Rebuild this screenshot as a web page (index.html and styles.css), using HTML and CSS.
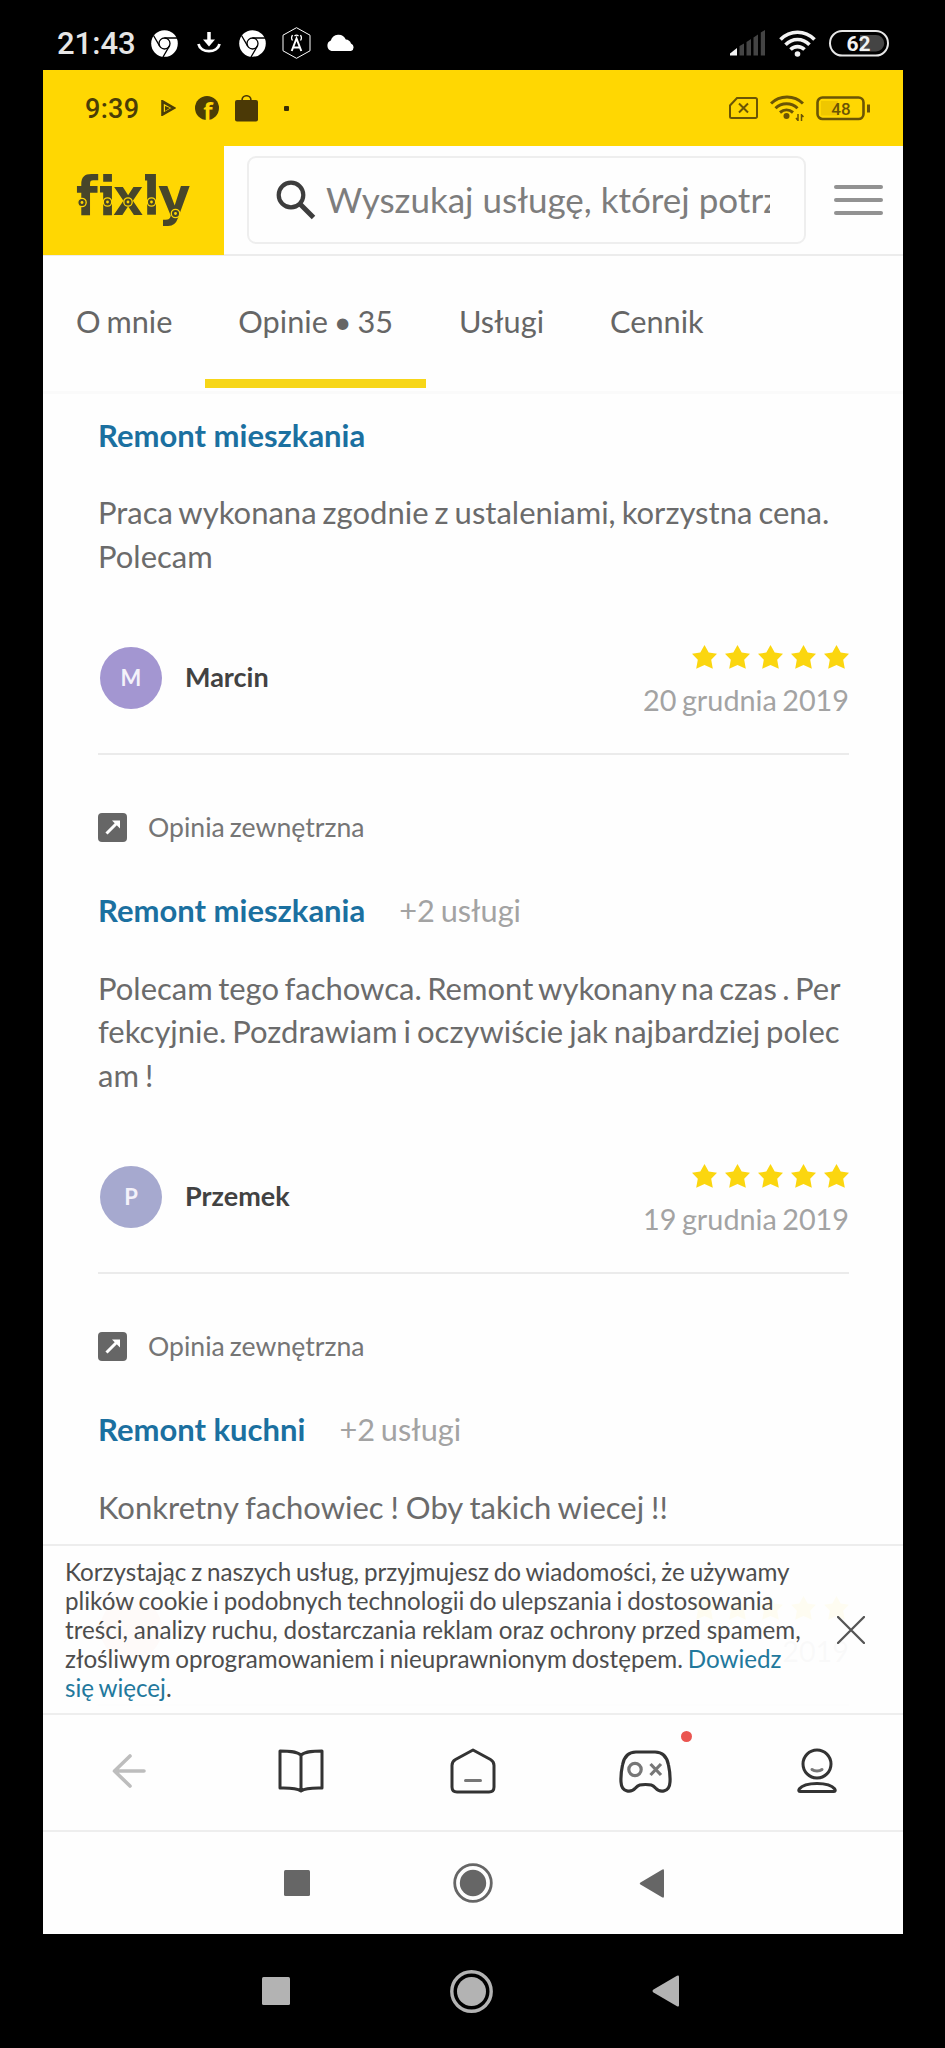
FILE: index.html
```html
<!DOCTYPE html>
<html lang="pl">
<head>
<meta charset="utf-8">
<title>Fixly – opinie</title>
<link rel="stylesheet" href="styles.css">
</head>
<body>
<svg width="0" height="0" class="defs">
  <defs>
    <symbol id="star" viewBox="0 0 25 24"><path d="M12.500 0l4.200 7.600 8.300 1.100-5.800 6 1.600 9-8.300-3.700L4.200 23.700l1.600-9L0 8.700l8.300-1.100z"/></symbol>
    <symbol id="stars" viewBox="0 0 157 24">
      <use href="#star" x="0" width="25" height="24"/><use href="#star" x="33" width="25" height="24"/><use href="#star" x="66" width="25" height="24"/><use href="#star" x="99" width="25" height="24"/><use href="#star" x="132" width="25" height="24"/>
    </symbol>
    <symbol id="chrome" viewBox="0 0 27 27">
      <circle cx="13.500" cy="13.500" r="13.300" fill="#fff"/>
      <g fill="none" stroke="#000" stroke-width="1.300"><circle cx="13.500" cy="13.500" r="5.500"/><path d="M13.500 8H26M8.700 16.200L2.500 5.500M18.300 16.200L12 27"/></g>
    </symbol>
    <symbol id="external" viewBox="0 0 29 29"><rect width="29" height="29" rx="4" fill="#666"/><path d="M8.500 20.500L19 10" stroke="#fff" stroke-width="3"/><path d="M14 7.500h8V15.500z" fill="#fff"/></symbol>
  </defs>
</svg>

<header class="status outer">
  <span class="time">21:43</span>
  <svg class="s-chrome1" width="27" height="27"><use href="#chrome"/></svg>
  <svg class="s-down" width="24" height="22" viewBox="0 0 24 22"><path d="M12 0v9" stroke="#fff" stroke-width="3.500"/><path d="M6 7.500h12l-6 7z" fill="#fff"/><path d="M1.500 12c2 9.500 19 9.500 21 0" fill="none" stroke="#fff" stroke-width="2.800"/></svg>
  <svg class="s-chrome2" width="27" height="27"><use href="#chrome"/></svg>
  <svg class="s-hex" width="29" height="32" viewBox="0 0 29 32" fill="none" stroke="#fff"><path d="M14.500.7L28 8.200v15.600L14.500 31.300 1 23.800V8.200z"/><path d="M9.700 24l4.800-12.500L19.300 24M11.500 20.500h6" stroke-width="2"/><path d="M10.500 13.500a5 5 0 0 1 0-5.500M18.500 13.500a5 5 0 0 0 0-5.500M12.500 9a3 3 0 0 1 4 0" stroke-width="1.300"/></svg>
  <svg class="s-cloud" width="29" height="17" viewBox="0 0 29 17" fill="#fff"><path d="M5.500 17a5.500 5.500 0 0 1-.7-10.400A8 8 0 0 1 19.800 5.500 6 6 0 0 1 25 9.500 4 4 0 0 1 25 17z"/></svg>
  <svg class="s-signal" width="35" height="26" viewBox="0 0 35 26"><path d="M0 25.500v-2L7 18v7.500z" fill="#f2f2f2"/><path d="M9.500 25.500V16l4.500-2.500v12zM16.500 25.500V12L21 9v16.500zM23.500 25.500V7.500L28 4.500v21zM30.800 25.500V2.500L35 0v25.500z" fill="#444"/></svg>
  <svg class="s-wifi" width="37" height="27" viewBox="0 0 37 27" fill="none" stroke="#f2f2f2" stroke-width="3.600"><path d="M1.500 9.500C11-.2 26-.2 35.500 9.500M6.500 14.700c7-7 17-7 24 0M11.500 19.600c4-4 10-4 14 0"/><circle cx="18.500" cy="24" r="2.800" fill="#f2f2f2" stroke="none"/></svg>
  <svg class="s-batt" width="60" height="27" viewBox="0 0 60 27"><rect x="1" y="1" width="58" height="24.500" rx="12.200" fill="none" stroke="#e6e6e6" stroke-width="2"/><path d="M31 5h16a8 8 0 0 1 0 16.500H31z" fill="#444"/><text x="29.500" y="21" text-anchor="middle" class="batt-num">62</text></svg>
</header>

<div class="phone">
  <div class="status inner">
    <span class="time2">9:39</span>
    <svg class="i-play" width="15" height="16" viewBox="0 0 15 16"><path d="M1.500 1.500L13 8 1.500 14.500z" fill="none" stroke="#4b3d06" stroke-width="2.600"/><path d="M4 6l5 2-5 3z" fill="#4b3d06"/></svg>
    <svg class="i-fb" width="24" height="24" viewBox="0 0 24 24"><circle cx="12" cy="12" r="12" fill="#4b3d06"/><text x="12.800" y="23.500" text-anchor="middle" class="fb-f">f</text></svg>
    <svg class="i-bag" width="23" height="27" viewBox="0 0 23 27"><rect y="5" width="23" height="21.500" rx="2" fill="#4b3906"/><path d="M7 5.500C7-.8 16-.8 16 5.500" fill="none" stroke="#4b3906" stroke-width="1.600"/></svg>
    <i class="i-dot"></i>
    <svg class="i-sim" width="29" height="22" viewBox="0 0 29 22" fill="none" stroke="#6b5505" stroke-width="2"><path d="M8 1h18.500a1.500 1.500 0 0 1 1.500 1.500v17a1.500 1.500 0 0 1-1.500 1.500H2.500A1.500 1.500 0 0 1 1 19.500V8.500z"/><path d="M10 6.500l9 9M19 6.500l-9 9"/></svg>
    <svg class="i-wifi" width="34" height="27" viewBox="0 0 34 27" fill="none" stroke="#6b5505" stroke-width="3"><path d="M1 8.500C9.500-.2 24.500-.2 33 8.500M5.500 13.200c6-6 16-6 22 0M10 17.500c4-3.500 9-3.500 13 0"/><circle cx="16.500" cy="21" r="3" fill="#6b5505" stroke="none"/><path d="M28 19v7M31.500 19v7M26 23l2 2.500M33.500 22l-2-2.500" stroke-width="1.500"/></svg>
    <svg class="i-batt" width="55" height="25" viewBox="0 0 55 25"><rect x="1.500" y="1.500" width="46" height="21.500" rx="5" fill="none" stroke="#6b5505" stroke-width="2.600"/><rect x="5" y="5" width="17" height="14.500" fill="#efc700"/><rect x="51" y="8.500" width="3" height="8" fill="#6b5505"/><text x="25" y="19" text-anchor="middle" class="batt-num2">48</text></svg>
  </div>

  <div class="topbar">
    <div class="logo">
      <svg width="181" height="109" viewBox="43 146 181 109">
        <text class="wordmark" transform="translate(0 215) scale(1 1.080)"><tspan x="76">f</tspan><tspan x="99">i</tspan><tspan x="113" class="wx">x</tspan><tspan x="143">l</tspan><tspan x="158">y</tspan></text>
        <g fill="#47462a"><rect x="100" y="186" width="8" height="6.500"/><rect x="145" y="174" width="8" height="6.500"/></g>
        <g fill="#47462a" stroke="#ffd702" stroke-width="1.300"><circle cx="82" cy="202.500" r="4.200"/><circle cx="107.500" cy="202" r="4.200"/><circle cx="128" cy="202" r="4.200"/><circle cx="151.500" cy="202" r="4.200"/><circle cx="175.500" cy="213.500" r="4.200"/></g>
        <g fill="#ffd702"><circle cx="82" cy="202.500" r="1.400"/><circle cx="107.500" cy="202" r="1.400"/><circle cx="128" cy="202" r="1.400"/><circle cx="151.500" cy="202" r="1.400"/><circle cx="175.500" cy="213.500" r="1.400"/></g>
      </svg>
    </div>
    <div class="search">
      <svg width="40" height="40" viewBox="0 0 40 40" fill="none" stroke="#3d3d3d"><circle cx="15" cy="15" r="12.300" stroke-width="4.200"/><path d="M24 24l13.500 13.500" stroke-width="5"/></svg>
      <div class="placeholder">Wyszukaj usługę, której potrz</div>
    </div>
    <div class="burger"><i></i><i></i><i></i></div>
  </div>

  <nav class="tabs">
    <a class="tab">O mnie</a>
    <a class="tab active">Opinie • 35</a>
    <a class="tab">Usługi</a>
    <a class="tab">Cennik</a>
  </nav>

  <main class="content">
    <article class="review">
      <h2 class="title">Remont mieszkania</h2>
      <p class="body">Praca wykonana zgodnie z ustaleniami, korzystna cena.<br>Polecam</p>
      <div class="author">
        <span class="avatar violet">M</span><strong>Marcin</strong>
        <div class="rating"><svg width="157" height="24"><use href="#stars"/></svg><time>20 grudnia 2019</time></div>
      </div>
    </article>
    <article class="review">
      <div class="source"><svg width="29" height="29"><use href="#external"/></svg><span>Opinia zewnętrzna</span></div>
      <h2 class="title">Remont mieszkania <small>+2 usługi</small></h2>
      <p class="body"><span class="snug">Polecam tego fachowca. Remont wykonany na czas . Per</span><br>fekcyjnie. Pozdrawiam i oczywiście jak najbardziej polec<br>am !</p>
      <div class="author">
        <span class="avatar blue">P</span><strong>Przemek</strong>
        <div class="rating"><svg width="157" height="24"><use href="#stars"/></svg><time>19 grudnia 2019</time></div>
      </div>
    </article>
    <article class="review">
      <div class="source"><svg width="29" height="29"><use href="#external"/></svg><span>Opinia zewnętrzna</span></div>
      <h2 class="title">Remont kuchni <small>+2 usługi</small></h2>
      <p class="body"><span class="loose">Konkretny fachowiec ! Oby takich wiecej !!</span></p>
      <div class="author">
        <span class="avatar rose"></span>
        <div class="rating"><svg width="157" height="24"><use href="#stars"/></svg><time>2019</time></div>
      </div>
    </article>

    <aside class="cookies">
      <p>Korzystając z naszych usług, przyjmujesz do wiadomości, że używamy<br>plików cookie i podobnych technologii do ulepszania i dostosowania<br><span class="loose">treści, analizy ruchu, dostarczania reklam oraz ochrony przed spamem,</span><br>złośliwym oprogramowaniem i nieuprawnionym dostępem. <a>Dowiedz</a><br><a>się więcej</a>.</p>
      <svg width="28" height="28" viewBox="0 0 28 28"><path d="M1 1l26 26M27 1L1 27" stroke="#555" stroke-width="2.300" stroke-linecap="round"/></svg>
    </aside>
  </main>

  <nav class="browser">
    <span><svg width="34" height="34" viewBox="0 0 34 34" fill="none" stroke="#bdbdbd" stroke-width="3.600" stroke-linecap="round" stroke-linejoin="round"><path d="M32 17H2.500M18 2L2.500 17 18 32"/></svg></span>
    <span><svg width="46" height="44" viewBox="0 0 46 44" fill="none" stroke="#333" stroke-width="3" stroke-linejoin="round"><path d="M23 6C18 2 10 2 2 2v37c8 0 16-.5 21 3 5-3.500 13-3 21-3V2c-8 0-16 0-21 4zM23 6v36"/></svg></span>
    <span><svg width="46" height="46" viewBox="0 0 46 46" fill="none" stroke="#333" stroke-width="3" stroke-linejoin="round"><path d="M23 2L40.500 11.500Q44 13.500 44 17.500V39q0 5-5 5H7q-5 0-5-5V17.500q0-4 3.500-6z"/><path d="M15.500 32.500h15" stroke="#777" stroke-linecap="round"/></svg></span>
    <span class="games"><svg width="53" height="43" viewBox="0 0 53 43" fill="none" stroke="#333" stroke-width="3.200"><path d="M17 2h19c8 0 12 5 13.500 13 1.500 7 1.800 12 1.500 17-.5 10-9.500 11.500-14.500 6-3-3.500-5-3.500-10-3.500s-7 0-10 3.500C11.500 43.500 2.500 42 2 32c-.3-5 0-10 1.500-17C5 7 9 2 17 2z"/><g stroke="#777"><circle cx="16" cy="19.500" r="6.200"/><path d="M31.500 14l10.500 11M42 14l-10.500 11"/></g></svg><i></i></span>
    <span><svg width="40" height="46" viewBox="0 0 40 46" fill="none" stroke="#333" stroke-width="3"><circle cx="20" cy="16" r="14"/><path d="M15 21.500c2.500 2 7.500 2 10 0" stroke="#777" stroke-linecap="round"/><path d="M3 43.500c-1.500 0-1.500-1.500-.8-2.500C8 33.500 32 33.500 37.800 41c.7 1 .7 2.500-.8 2.500z"/></svg></span>
  </nav>

  <div class="keys light">
    <svg width="26" height="26" viewBox="0 0 26 26"><rect width="26" height="26" rx="1.500"/></svg>
    <svg class="home" width="40" height="40" viewBox="0 0 40 40"><circle cx="20" cy="20" r="18.300" fill="none" stroke="#666" stroke-width="2.800"/><circle cx="20" cy="20" r="13.200"/></svg>
    <svg width="25" height="29" viewBox="0 0 25 29"><path d="M1.500 13.500L23 .7q2-1 2 1v25.600q0 2-2 1L1.500 15.500q-1.500-1 0-2z"/></svg>
  </div>
</div>

<footer class="keys dark">
  <svg width="28" height="28" viewBox="0 0 28 28"><rect width="28" height="28" rx="1.500"/></svg>
  <svg width="43" height="43" viewBox="0 0 43 43"><circle cx="21.500" cy="21.500" r="19.700" fill="none" stroke="#b3b3b3" stroke-width="3.400"/><circle cx="21.500" cy="21.500" r="14.500"/></svg>
  <svg width="27" height="32" viewBox="0 0 27 32"><path d="M1.500 14.500L25 .8q2-1 2 1v28.400q0 2-2 1L1.500 17.500q-2-1.500 0-3z"/></svg>
</footer>
</body>
</html>
```
FILE: styles.css
```css
* { box-sizing: border-box; }
body { margin: 0; width: 945px; height: 2048px; background: #000; font-family: Lato, "Open Sans", sans-serif; overflow: hidden; }
svg { display: block; flex: none; }
.defs { position: absolute; }

.status { display: flex; align-items: center; font-family: Roboto, sans-serif; }
.outer { height: 70px; padding: 16px 56px 0 57px; color: #e6e6e6; }
.time { width: 94px; font-size: 31px; font-weight: 500; line-height: 30px; padding-top: 1px; white-space: nowrap; }
.s-down { margin-left: 19px; }
.s-chrome2 { margin-left: 18px; }
.s-hex { margin-left: 16px; }
.s-cloud { margin-left: 15px; margin-top: -2px; }
.s-signal { margin-left: auto; }
.s-wifi { margin-left: 14px; }
.s-batt { margin-left: 13px; }
.batt-num { font: 700 21px Roboto, sans-serif; fill: #f2f2f2; }

.phone { width: 860px; height: 1864px; margin-left: 43px; background: #fefefe; display: flex; flex-direction: column; }
.inner { height: 76px; padding: 0 32px 0 42px; background: #ffd702; color: #4b3d06; }
.time2 { width: 76px; font-size: 27px; font-weight: 500; letter-spacing: .3px; padding-top: 1px; }
.i-fb { margin-left: 19px; }
.fb-f { font: 700 24px "Open Sans", sans-serif; fill: #ffd702; }
.i-bag { margin-left: 16px; }
.i-dot { width: 5px; height: 5px; margin-left: 26px; border-radius: 1px; background: #3b2f04; }
.i-sim { margin-left: auto; }
.i-wifi { margin-left: 12px; }
.i-batt { margin-left: 12px; }
.batt-num2 { font: 500 17px Roboto, sans-serif; fill: #6b5505; }

.topbar { display: flex; align-items: center; height: 110px; border-bottom: 2px solid #ececec; }
.logo { width: 181px; height: 109px; align-self: flex-start; background: #ffd702; }
.wordmark { font: 700 50px "DejaVu Sans", sans-serif; fill: #47462a; }
.wx { font-size: 47px; }
.search { display: flex; align-items: center; width: 559px; height: 88px; margin-left: 23px; padding-left: 27px; border: 2px solid #eee; border-radius: 9px; }
.placeholder { width: 444px; margin-left: 10px; padding-bottom: 3px; overflow: hidden; white-space: nowrap; font-size: 35px; line-height: 48px; color: #7d7d7d; }
.burger { display: flex; flex-direction: column; gap: 9px; margin-left: 28px; padding-bottom: 1px; }
.burger i { width: 49px; height: 4px; border-radius: 2px; background: #929292; }

.tabs { display: flex; height: 138px; border-bottom: 3px solid #fafafa; }
.tab { height: 132px; padding: 44px 33px 0; font-size: 30.700px; word-spacing: -2px; line-height: 44px; color: #666; white-space: nowrap; }
.tab.active { border-bottom: 9px solid #f7d618; }

.content { position: relative; height: 1319px; padding: 19px 54px 0 55px; overflow: hidden; }
.review + .review { margin-top: 57.500px; }
.title { display: flex; align-items: baseline; gap: 34px; margin: 0; font-size: 31px; font-weight: 700; line-height: 44px; color: #1b70a0; white-space: nowrap; }
.title small { font-size: 30.700px; font-weight: 400; word-spacing: -2px; color: #a3a3a3; }
.body { margin: 34px 0 59px; font-size: 31px; line-height: 43.500px; word-spacing: -1.900px; color: #6b6b6b; white-space: nowrap; }
.body .snug { word-spacing: -2.500px; }
.body .loose { word-spacing: -1px; }
.author { display: flex; align-items: center; height: 118px; padding-bottom: 35px; border-bottom: 2px solid #ebebeb; }
.avatar { display: grid; place-items: center; width: 62px; height: 62px; margin-left: 2px; border-radius: 50%; font-size: 22px; font-weight: 700; color: #f4f2fa; }
.violet { background: #a396d1; }
.blue { background: #a6a9cf; }
.rose { background: #f0a8a0; }
.author strong { margin-left: 23px; font-size: 27px; line-height: 32px; padding-bottom: 2px; font-weight: 700; color: #424242; }
.rating { display: flex; flex-direction: column; align-items: flex-end; gap: 13px; margin-left: auto; padding-top: 8px; fill: #fbd60f; }
.rating time { font-size: 28.800px; line-height: 36px; word-spacing: -2px; color: #a3a3a3; }
.source { display: flex; align-items: center; height: 29px; margin-bottom: 46px; font-size: 26.600px; word-spacing: -1.700px; color: #757575; }
.source span { margin-left: 21px; }

.cookies { position: absolute; left: 0; right: 0; bottom: 0; display: flex; justify-content: space-between; height: 169px; padding: 12px 38px 0 22px; border-top: 2px solid #ededed; background: rgba(254, 254, 254, .95); }
.cookies p { margin: 0; font-size: 24.200px; line-height: 28.900px; word-spacing: -1.300px; color: #4d4d4d; white-space: nowrap; }
.cookies .loose { word-spacing: -.4px; }
.cookies a { color: #22789c; }
.cookies svg { margin-top: 58px; }

.browser { display: grid; grid-template-columns: repeat(5, 1fr); place-items: center; height: 119px; padding-bottom: 3px; border-top: 2px solid #eee; border-bottom: 2px solid #eee; }
.games { position: relative; }
.games i { position: absolute; left: 62px; top: -19px; width: 11px; height: 11px; border-radius: 50%; background: #ea5550; }

.keys { display: flex; align-items: center; justify-content: space-between; }
.light { flex: 1; padding: 0 239px 0 241px; fill: #666; }
.home { margin-right: 3px; }
.dark { height: 114px; padding: 0 266px 0 262px; fill: #b3b3b3; }
```
